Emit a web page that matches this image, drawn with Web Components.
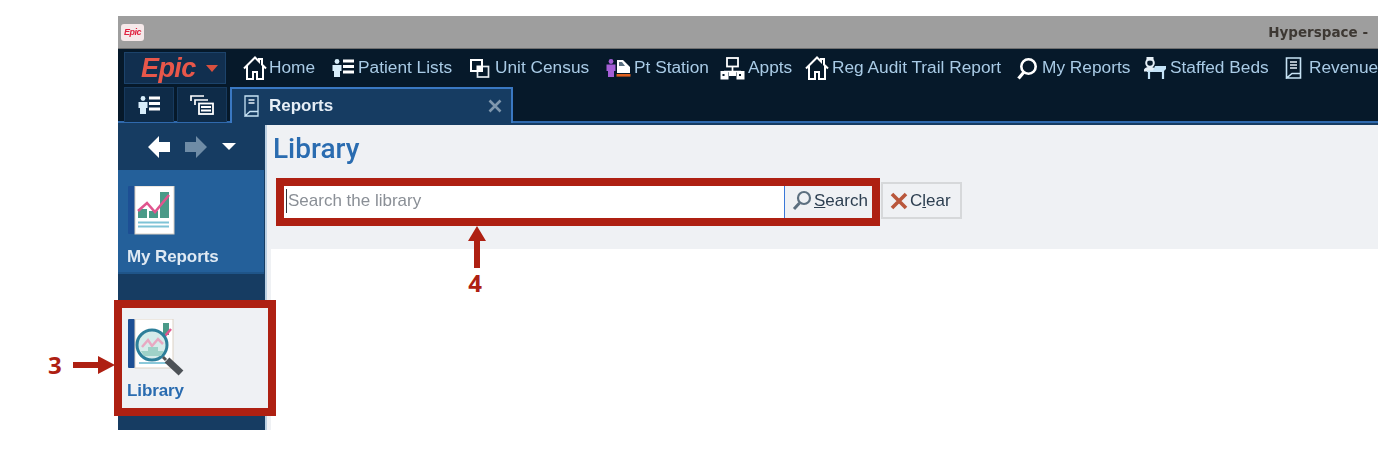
<!DOCTYPE html>
<html lang="en">
<head>
<meta charset="utf-8">
<title>Reports</title>
<style>
  html, body { margin: 0; background: #fff; }
  body { position: relative; width: 1382px; height: 450px; overflow: hidden; font-family: "Liberation Sans", Arial, sans-serif; }
</style>
</head>
<body>
<hs-window>
  <hs-titlebar slot="title">Hyperspace -</hs-titlebar>
  <hs-toolbar slot="toolbar">
    <hs-tool label="Home" gap="2" width="89"><svg width="24" height="24" viewBox="0 0 24 24"><path d="M1 12.500 12 1.500l4 4V3h3v5.500l4 4M4 10v13h6v-7h4v7h6V10" fill="none" stroke="#fff" stroke-width="2"/></svg></hs-tool>
    <hs-tool label="Patient Lists" gap="4" width="138"><svg width="22" height="18" viewBox="0 0 22 18"><circle cx="5" cy="2.500" r="2.400" fill="#d8eefb"/><path d="M.5 6h9v6H8v6H2v-6H.5z" fill="#d8eefb"/><path d="M11 2h11M11 7.500h11M11 13h11" stroke="#fff" stroke-width="2.800"/></svg></hs-tool>
    <hs-tool label="Unit Census" gap="5" width="136"><svg width="20" height="19" viewBox="0 0 20 19"><rect x="7.500" y="7.500" width="11" height="10.500" fill="#06192a" stroke="#e6ebef" stroke-width="1.700"/><rect x="1" y="1" width="11" height="11" fill="#06192a" stroke="#fff" stroke-width="2"/><rect x="6.500" y="6.500" width="6.500" height="6.500" fill="#fff"/></svg></hs-tool>
    <hs-tool label="Pt Station" gap="3" width="114"><svg width="25" height="18" viewBox="0 0 25 18"><circle cx="5" cy="2.500" r="2.400" fill="#a45fd6"/><path d="M.5 5.500h9V12H8v6H2v-6H.5z" fill="#a45fd6"/><path d="M11 1h6l7 7v6H11z" fill="#fff"/><path d="M13 3h3l3 4h-6z" fill="#5a6f80"/><rect x="10.500" y="15" width="14" height="2.600" fill="#e0611f"/></svg></hs-tool>
    <hs-tool label="Appts" gap="3" width="85"><svg width="25" height="23" viewBox="0 0 25 23"><rect x="7" y="1" width="11" height="8.500" fill="none" stroke="#fff" stroke-width="1.800"/><path d="M12.500 9.500v5M4 14.500h17" stroke="#fff" stroke-width="1.700"/><g fill="#fff"><rect x=".5" y="14" width="8" height="8.500"/><rect x="16.500" y="14" width="8" height="8.500"/><rect x="9" y="14" width="7" height="5"/></g><g fill="#06192a"><rect x="2.500" y="17" width="2" height="2"/><rect x="19" y="17" width="2" height="2"/></g></svg></hs-tool>
    <hs-tool label="Reg Audit Trail Report" gap="3" width="212"><svg width="24" height="24" viewBox="0 0 24 24"><path d="M1 12.500 12 1.500l4 4V3h3v5.500l4 4M4 10v13h6v-7h4v7h6V10" fill="none" stroke="#fff" stroke-width="2"/></svg></hs-tool>
    <hs-tool label="My Reports" gap="4" width="126"><svg width="21" height="23" viewBox="0 0 21 23"><circle cx="11.500" cy="9.500" r="7.200" fill="none" stroke="#fff" stroke-width="2.600"/><path d="M7 15 1.500 21.500" stroke="#fff" stroke-width="3.200"/></svg></hs-tool>
    <hs-tool label="Staffed Beds" gap="3" width="142"><svg width="24" height="24" viewBox="0 0 24 24"><circle cx="7" cy="7" r="3.800" fill="none" stroke="#e6f0f7" stroke-width="2"/><path d="M3.500 1h7v3.500h-7zM1 13.500c1-2 3-2.500 6-2.500s4 .5 5 2v2.500H1z" fill="#e6f0f7"/><path d="M4 16h16l3-3V10H12l-2 4.500H4z" fill="#c4e3f7"/><path d="M6 16v7M20 15v8" stroke="#c4e3f7" stroke-width="2.200"/></svg></hs-tool>
    <hs-tool label="Revenue" gap="7" width="100"><svg width="17" height="22" viewBox="0 0 17 22"><path d="M1.500 21V1h14v15.500H7zM1.500 21h14v-4.500" fill="none" stroke="#c7e3f5" stroke-width="1.600"/><path d="M5 5h7M5 8h7M5 11h7" stroke="#e6f0f7" stroke-width="1.400"/></svg></hs-tool>
  </hs-toolbar>
  <hs-tabs slot="tabs"></hs-tabs>
  <hs-sidebar slot="side">
    <hs-tile label="My Reports">
      <svg width="48" height="50" viewBox="0 0 48 50">
        <rect x="0" y="0" width="7" height="48" rx="1" fill="#1d4f94"/>
        <rect x="7" y="0" width="39" height="48" fill="#fff" stroke="#d9cfc2"/>
        <path d="M10 23h9v9h-9zM21 25h9v7h-9zM32 6h9v26h-9z" fill="#4a9a88"/>
        <path d="M10 25l9-8 8 9 14-17" fill="none" stroke="#e0558e" stroke-width="2.600"/>
        <path d="M10 36.500h31M10 40.500h31" stroke="#7fc3d6" stroke-width="2"/>
      </svg>
    </hs-tile>
    <hs-tile label="Library" active>
      <svg width="58" height="60" viewBox="0 0 58 60">
        <rect x="0" y="0" width="7" height="49" rx="1" fill="#1d4f94"/>
        <rect x="7" y="0" width="38" height="49" fill="#fff" stroke="#dcd2c4"/>
        <path d="M35 4h6v12h-6z" fill="#4a9a88"/>
        <path d="M37 17l6-7" stroke="#e0558e" stroke-width="2.500"/>
        <path d="M11 44h30" stroke="#7fc3d6" stroke-width="1.800"/>
        <circle cx="24" cy="26" r="15" fill="#d6ecea" stroke="#2d7f9a" stroke-width="3"/>
        <path d="M14 28l6-7 4 6 6-7 5 5" fill="none" stroke="#e8a9c2" stroke-width="2.500"/>
        <path d="M13 32h7v-4h10v4h6l-3 5H16z" fill="#9fd2c8"/>
        <path d="M35 38l3 3" stroke="#555" stroke-width="3"/>
        <path d="M39 41l14 13" stroke="#4d5257" stroke-width="7"/>
      </svg>
    </hs-tile>
  </hs-sidebar>
  <hs-library slot="main"></hs-library>
</hs-window>

<hs-callout style="left:114px;top:300px;width:146px;height:100px"></hs-callout>
<hs-callout style="left:276px;top:178px;width:588px;height:32px"></hs-callout>
<hs-marker number="3" dir="right" style="left:48px;top:351px"></hs-marker>
<hs-marker number="4" dir="up" style="left:468px;top:226px"></hs-marker>

<script>
  const hostFont = '"Liberation Sans", Arial, sans-serif'

  customElements.define('hs-window', class extends HTMLElement {
    constructor () {
      super()
      this.attachShadow({ mode: 'open' }).innerHTML = `
        <style>
          :host { display: grid; grid-template-columns: 147px minmax(0, 1fr); grid-template-rows: 33px 38px 36px 1fr;
            width: 1260px; height: 414px; margin: 16px 0 0 118px; overflow: hidden; background: #163c62; filter: blur(.35px); }
          ::slotted([slot=title]), ::slotted([slot=toolbar]), ::slotted([slot=tabs]) { grid-column: 1 / 3; }
        </style>
        <slot name="title"></slot>
        <slot name="toolbar"></slot>
        <slot name="tabs"></slot>
        <slot name="side"></slot>
        <slot name="main"></slot>`
    }
  })

  customElements.define('hs-titlebar', class extends HTMLElement {
    constructor () {
      super()
      this.attachShadow({ mode: 'open' }).innerHTML = `
        <style>
          :host { display: flex; align-items: center; justify-content: space-between; background: #9e9e9e;
            border-bottom: 1px solid #6f6f6f; box-sizing: border-box; padding: 0 10px 0 3px; }
          .logo { width: 23px; height: 17px; border-radius: 3px; background: #f6e9ea; color: #e0203f;
            font: italic bold 9px/17px ${hostFont}; text-align: center; letter-spacing: -.5px; }
          .name { font: bold 13.500px "DejaVu Sans", sans-serif; color: #3d3833; }
        </style>
        <div class="logo">Epic</div>
        <div class="name"><slot></slot></div>`
    }
  })

  customElements.define('hs-toolbar', class extends HTMLElement {
    constructor () {
      super()
      this.attachShadow({ mode: 'open' }).innerHTML = `
        <style>
          :host { display: flex; align-items: center; background: #06192a; padding-left: 6px; white-space: nowrap; overflow: hidden; }
          .epic { display: flex; flex: none; align-items: center; box-sizing: border-box; width: 102px; height: 32px; margin-right: 17px;
            padding-left: 16px; background: #112f4f; border: 1px solid #1c436b; }
          .word { font: italic bold 27px/30px ${hostFont}; color: #e8574a; letter-spacing: -.6px; }
          .caret { flex: none; margin-left: 10px; width: 0; height: 0; border: 6.500px solid transparent; border-top: 7px solid #d9503f; border-bottom: 0; }
          .items { display: flex; flex: none; align-items: center; }
        </style>
        <div class="epic"><span class="word">Epic</span><span class="caret"></span></div>
        <div class="items"><slot></slot></div>`
    }
  })

  customElements.define('hs-tool', class extends HTMLElement {
    constructor () {
      super()
      this.attachShadow({ mode: 'open' }).innerHTML = `
        <style>
          :host { display: inline-flex; align-items: center; box-sizing: border-box; width: ${this.getAttribute('width')}px;
            font: 17.300px ${hostFont}; color: #a9cbe6; flex: none; }
          ::slotted(svg) { display: block; flex: none; }
          .text { padding-bottom: 2px; }
        </style>
        <slot></slot>
        <span class="text" style="margin-left:${this.getAttribute('gap')}px">${this.getAttribute('label')}</span>`
    }
  })

  customElements.define('hs-tabs', class extends HTMLElement {
    constructor () {
      super()
      this.attachShadow({ mode: 'open' }).innerHTML = `
        <style>
          :host { display: flex; align-items: flex-end; gap: 3px; padding-left: 6px; background: #06192a;
            box-shadow: inset 0 -2px 0 #2f69ad; }
          .mini { display: flex; align-items: center; justify-content: center; box-sizing: border-box; width: 50px; height: 35px;
            margin-bottom: 1px; background: #0e2b48; border: 1px solid #173a5e; border-bottom: 0; }
          .tab { display: flex; align-items: center; box-sizing: border-box; width: 283px; height: 36px; padding: 0 9px 0 12px;
            background: #163c62; border: 2px solid #3a78c2; border-bottom: 0; font: bold 17px ${hostFont}; color: #e6eef6; }
          .label { margin-left: 10px; flex: 1; }
          .close { display: block; }
        </style>
        <div class="mini"><svg width="22" height="18" viewBox="0 0 22 18"><circle cx="5" cy="2.500" r="2.400" fill="#d8eefb"/><path d="M.5 6h9v6H8v6H2v-6H.5z" fill="#d8eefb"/><path d="M11 2h11M11 7.500h11M11 13h11" stroke="#fff" stroke-width="2.800"/></svg></div>
        <div class="mini"><svg width="24" height="20" viewBox="0 0 24 20"><path d="M1 6V1h13M5 10V5h13" fill="none" stroke="#fff" stroke-width="1.700"/><rect x="9" y="8.500" width="14" height="10.500" fill="none" stroke="#fff" stroke-width="1.800"/><path d="M11 12h10M11 15.500h10" stroke="#fff" stroke-width="2"/></svg></div>
        <div class="tab">
          <svg width="15" height="22" viewBox="0 0 15 22"><path d="M1 21V1h13v15.500H6zM1 21h13v-4.500" fill="none" stroke="#c7e3f5" stroke-width="1.300"/><path d="M4.500 5h6M4.500 8h6" stroke="#e6f0f7" stroke-width="1.300"/></svg>
          <span class="label">Reports</span>
          <svg class="close" width="14" height="14" viewBox="0 0 14 14"><path d="M1.500 1.500l11 11M12.500 1.500l-11 11" stroke="#7f97ad" stroke-width="2.600"/></svg>
        </div>`
    }
  })

  customElements.define('hs-sidebar', class extends HTMLElement {
    constructor () {
      super()
      this.attachShadow({ mode: 'open' }).innerHTML = `
        <style>
          :host { display: flex; flex-direction: column; background: #163c62; min-height: 0; }
          .nav { display: flex; align-items: center; height: 47px; padding: 0 0 0 30px; flex: none; }
          .fwd { margin-left: 15px; }
          .drop { margin-left: 15px; width: 0; height: 0; border: 7.500px solid transparent; border-top: 7px solid #fff; border-bottom: 0; }
          svg { display: block; }
        </style>
        <div class="nav">
          <svg width="22" height="22" viewBox="0 0 22 22"><path d="M0 11 11 0v6h11v10H11v6z" fill="#fff"/></svg>
          <svg class="fwd" width="22" height="22" viewBox="0 0 22 22"><path d="M22 11 11 0v6H0v10h11v6z" fill="#6f8ca6"/></svg>
          <span class="drop"></span>
        </div>
        <slot></slot>`
    }
  })

  customElements.define('hs-tile', class extends HTMLElement {
    constructor () {
      super()
      const active = this.hasAttribute('active')
      this.attachShadow({ mode: 'open' }).innerHTML = `
        <style>
          :host { display: flex; flex-direction: column; box-sizing: border-box; flex: none; width: ${active ? 150 : 146}px;
            height: ${active ? 100 : 104}px; padding: ${active ? '11px 0 0 10px' : '16px 0 0 10px'};
            margin-top: ${active ? 34 : 0}px; margin-left: ${active ? 4 : 0}px; position: relative; z-index: 1;
            background: ${active ? '#eff1f4' : '#24609a'}; border-bottom: 2px solid ${active ? '#eff1f4' : '#1f5589'};
            font: bold 17px ${hostFont}; color: ${active ? '#2a6cb0' : '#dfe9f3'}; }
          .icon { height: ${active ? 61 : 59}px; margin-left: ${active ? -4 : 0}px; }
          .label { margin-left: ${active ? -5 : -1}px; line-height: 18px; margin-top: ${active ? 2 : 3}px; letter-spacing: -.1px; }
          ::slotted(svg) { display: block; }
        </style>
        <div class="icon"><slot></slot></div>
        <div class="label">${this.getAttribute('label')}</div>`
    }
  })

  customElements.define('hs-library', class extends HTMLElement {
    constructor () {
      super()
      this.attachShadow({ mode: 'open' }).innerHTML = `
        <style>
          :host { display: flex; flex-direction: column; min-height: 0; background: #eff1f4; border-left: 2px solid #bcd0e2; margin-top: 2px; }
          h1 { margin: 0; padding: 6px 0 0 6px; height: 57px; box-sizing: border-box; font: 500 28px/36px Roboto, sans-serif; color: #2a6cb0; }
          .row { display: flex; align-items: stretch; height: 37px; padding-left: 17px; flex: none; }
          .input { display: flex; align-items: center; width: 500px; background: #fff; border-right: 1px solid #3a78d8; font-size: 17px; color: #8a8f96; }
          .cursor { width: 1px; height: 24px; margin-left: 2px; margin-right: 1px; background: #30343a; }
          .btn { display: flex; align-items: center; box-sizing: border-box; font: 17px ${hostFont}; color: #2c3e50; }
          .search { width: 88px; padding-left: 7px; }
          .clear { width: 81px; margin-left: 8px; padding-left: 7px; border: 2px solid #d6d8da; }
          .row svg { margin-right: 2px; display: block; }
          .panel { flex: 1; background: #fff; margin: 30px 0 0 4px; }
        </style>
        <h1>Library</h1>
        <div class="row">
          <div class="input"><span class="cursor"></span><span>Search the library</span></div>
          <div class="btn search">
            <svg width="20" height="21" viewBox="0 0 20 21"><circle cx="12" cy="8" r="6" fill="none" stroke="#5c6f7f" stroke-width="2.200"/><path d="M7.500 13 2 19" stroke="#5c6f7f" stroke-width="3"/></svg>
            <span><u>S</u>earch</span>
          </div>
          <div class="btn clear">
            <svg width="18" height="18" viewBox="0 0 18 18"><path d="M2 2l14 14M16 2 2 16" stroke="#b9573c" stroke-width="3.600"/></svg>
            <span>C<u>l</u>ear</span>
          </div>
        </div>
        <div class="panel"></div>`
    }
  })

  customElements.define('hs-callout', class extends HTMLElement {
    constructor () {
      super()
      this.attachShadow({ mode: 'open' }).innerHTML = `
        <style>
          :host { position: absolute; display: block; border: 8px solid #ae2012; }
        </style>`
    }
  })

  customElements.define('hs-marker', class extends HTMLElement {
    constructor () {
      super()
      const up = this.getAttribute('dir') === 'up'
      const arrow = up
        ? '<svg width="18" height="42" viewBox="0 0 18 42"><path d="M9 0l9 15h-6v27H6V15H0z" fill="#ae2012"/></svg>'
        : '<svg width="42" height="18" viewBox="0 0 42 18"><path d="M42 9 25 0v6H0v6h25v6z" fill="#ae2012"/></svg>'
      this.attachShadow({ mode: 'open' }).innerHTML = `
        <style>
          :host { position: absolute; display: flex; flex-direction: ${up ? 'column-reverse' : 'row'}; align-items: center;
            gap: ${up ? 1 : 11}px; font: bold 24px/28px "Open Sans", sans-serif; color: #ae2012; }
          span { ${up ? 'margin-right: 4px;' : ''} }
          svg { display: block; }
        </style>
        <span>${this.getAttribute('number')}</span>${arrow}`
    }
  })
</script>
</body>
</html>
